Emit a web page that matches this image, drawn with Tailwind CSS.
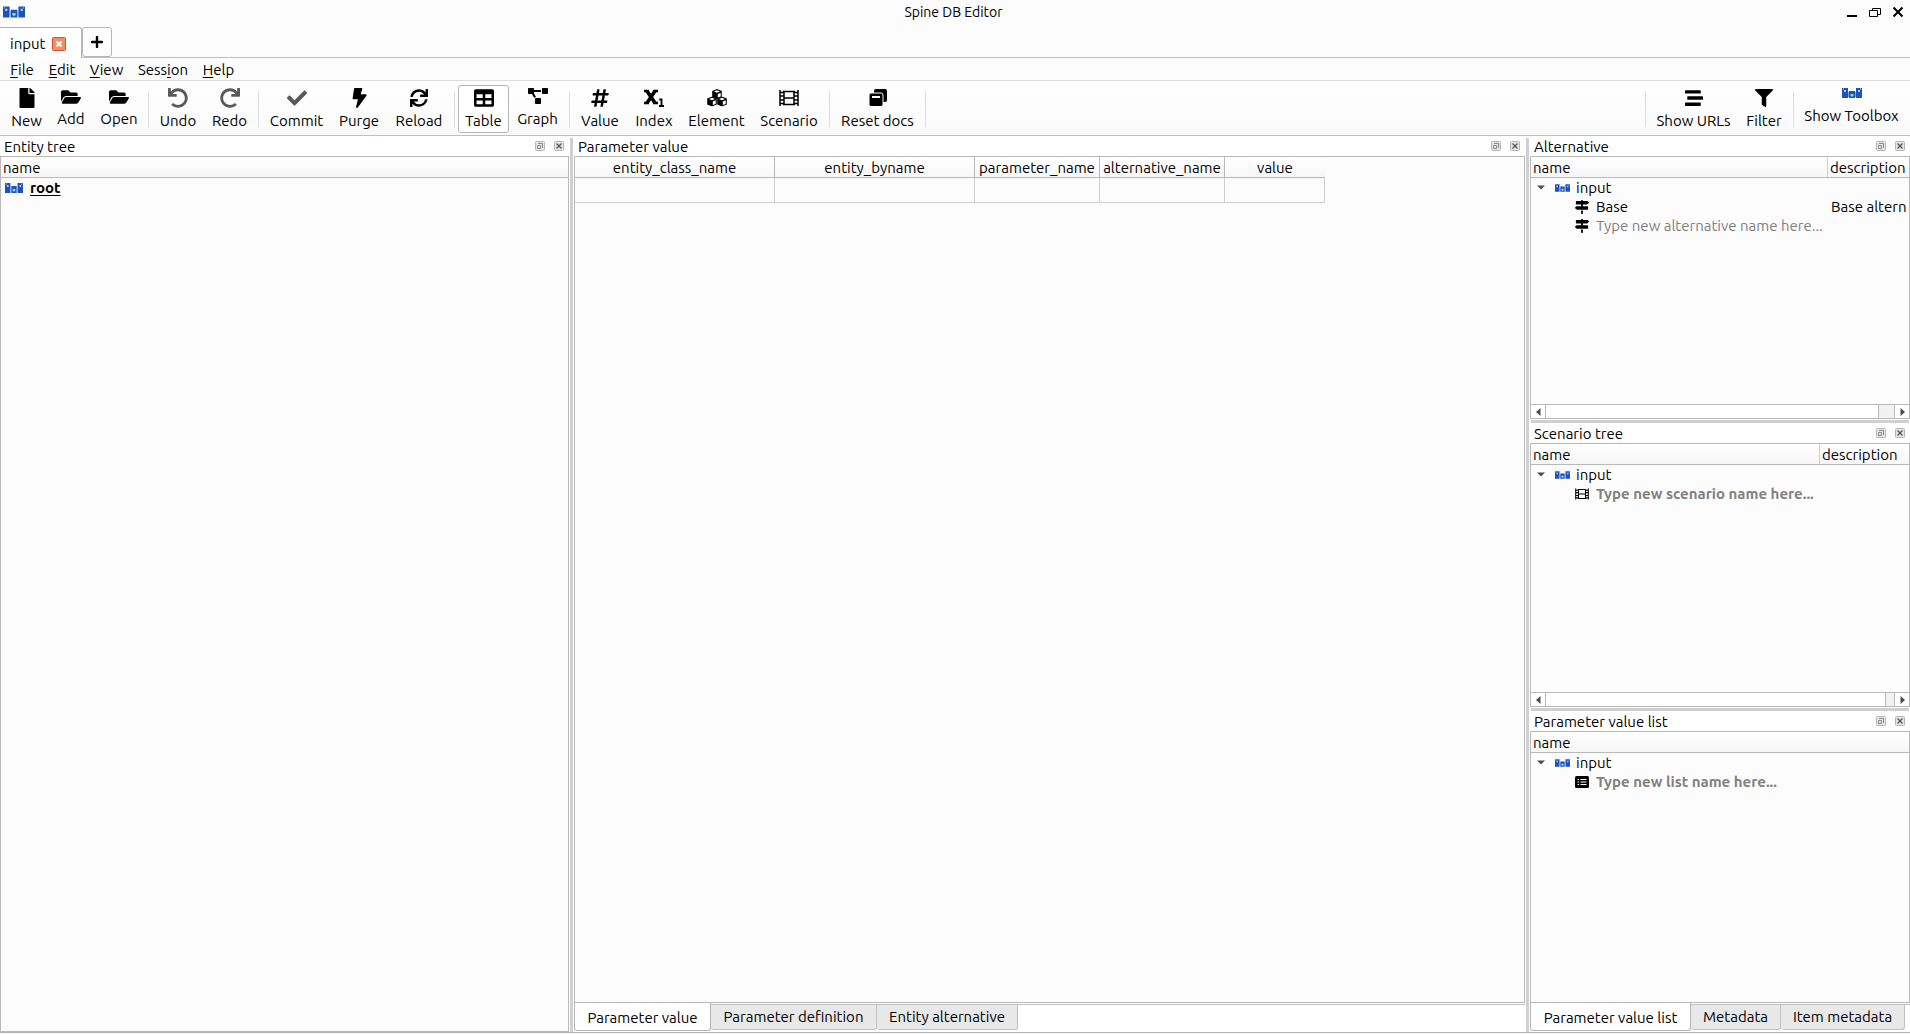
<!DOCTYPE html>
<html lang="en">
<head>
<meta charset="utf-8">
<title>Spine DB Editor</title>
<script src="https://cdn.jsdelivr.net/npm/@tailwindcss/browser@4"></script>
</head>
<body class="flex h-screen flex-col overflow-hidden bg-[#fcfcfc] font-['Ubuntu','Noto_Sans',sans-serif] text-[15px] leading-5 text-black">

<svg class="hidden">
  <symbol id="spine" viewBox="0 0 20 10">
    <path fill="#1f4fc4" d="M0 0h6v10H0zM14 0h6v10h-6zM7 3h6v7H7z"/>
    <path fill="#7f9be0" d="M6 4h1v5H6zM13 4h1v5h-1zM1 0h1v2H1zM18 0h1v2h-1z"/>
    <path fill="#8fe39a" d="M2 2h2v2H2zM16 2h2v2h-2zM8.500 6h3v1.500L10 9 8.500 7.500z"/>
  </symbol>
  <symbol id="film" viewBox="0 0 20 16">
    <path fill="none" stroke="currentColor" stroke-width="1.500" d="M1 0v16M19 0v16M5 1v14M15 1v14M4 1.500h12M4 14.500h12M5 8h10M1 2.500h4M1 6h4M1 10h4M1 13.500h4M15 2.500h4M15 6h4M15 10h4M15 13.500h4"/>
  </symbol>
  <symbol id="signs" viewBox="0 0 512 512">
    <path fill="currentColor" d="M507.310 84.690L464 41.370c-6-6-14.140-9.370-22.630-9.370H288V16c0-8.840-7.160-16-16-16h-32c-8.840 0-16 7.160-16 16v16H56c-13.250 0-24 10.750-24 24v80c0 13.250 10.750 24 24 24h385.370c8.490 0 16.620-3.370 22.630-9.370l43.310-43.310c6.250-6.260 6.250-16.380 0-22.630zM224 496c0 8.840 7.160 16 16 16h32c8.840 0 16-7.160 16-16V384h-64v112zm232-272H288v-32h-64v32H70.630c-8.490 0-16.620 3.370-22.630 9.370L4.690 276.690c-6.250 6.250-6.250 16.380 0 22.630L48 342.630c6 6 14.140 9.370 22.630 9.370H456c13.250 0 24-10.750 24-24v-80c0-13.250-10.750-24-24-24zM224 160h64v32h-64z"/>
  </symbol>
  <symbol id="float" viewBox="0 0 10 10">
    <rect x=".5" y=".5" width="9" height="9" rx="1" fill="#e6e6e6" stroke="#b5b5b5"/>
    <path fill="none" stroke="#8a8a8a" d="M3 2.500h4.500V7M2.500 4.500h3v3h-3z"/>
  </symbol>
  <symbol id="shut" viewBox="0 0 10 10">
    <rect x=".5" y=".5" width="9" height="9" rx="1" fill="#e6e6e6" stroke="#b5b5b5"/>
    <path fill="none" stroke="#555" stroke-width="1.300" d="M2.500 2.500l5 5M7.500 2.500l-5 5"/>
  </symbol>
  <symbol id="folder" viewBox="0 0 576 512">
    <path fill="currentColor" d="M572.694 292.093L500.270 416.248A63.997 63.997 0 0 1 444.989 448H45.025c-18.523 0-30.064-20.093-20.731-36.093l72.424-124.155A64 64 0 0 1 152 256h399.964c18.523 0 30.064 20.093 20.730 36.093zM152 224h328v-48c0-26.510-21.490-48-48-48H272l-64-64H48C21.490 64 0 85.490 0 112v278.046l69.077-118.418C86.214 242.250 117.989 224 152 224z"/>
  </symbol>
  <symbol id="undo" viewBox="0 0 512 512">
    <path fill="currentColor" d="M212.333 224.333H12c-6.627 0-12-5.373-12-12V12C0 5.373 5.373 0 12 0h48c6.627 0 12 5.373 12 12v78.112C117.773 39.279 184.260 7.470 258.175 8.007c136.906.994 246.448 111.623 246.157 248.532C504.041 393.258 393.120 504 256.333 504c-64.089 0-122.496-24.313-166.510-64.215-5.099-4.622-5.334-12.554-.467-17.420l33.967-33.967c4.474-4.474 11.662-4.717 16.401-.525C170.760 415.336 211.580 432 256.333 432c97.268 0 176-78.716 176-176 0-97.267-78.716-176-176-176-58.496 0-110.280 28.476-142.274 72.333h98.274c6.627 0 12 5.373 12 12v48c0 6.627-5.373 12-12 12z"/>
  </symbol>
  <symbol id="cube" viewBox="0 0 10 10">
    <path d="M5 0l4.800 2v6L5 10 .2 8V2z"/>
    <path fill="#fff" d="M5 1.200l3 1.200-3 1.300-3-1.300zM5.800 5l2.900-1.300v3.700L5.800 8.600z"/>
  </symbol>
  <symbol id="down" viewBox="0 0 8 5"><path fill="#4d4d4d" d="M0 .5h8L4 4.500z"/></symbol>
</svg>

<header class="flex h-[27px] shrink-0 items-center justify-between pr-[6px] pb-1 pl-[3px]">
  <svg class="h-3 w-[22px]"><use href="#spine"/></svg>
  <h1 class="pl-9 text-sm">Spine DB Editor</h1>
  <div class="flex items-center gap-[11px]">
    <button aria-label="Minimize"><svg class="h-3 w-3" viewBox="0 0 12 12"><path fill="#000" d="M1 9h10v2H1z"/></svg></button>
    <button aria-label="Restore"><svg class="h-3 w-3" viewBox="0 0 12 12" fill="none" stroke="#000"><path d="M.5 4.500h8v6h-8zM3.500 4V2.500h8v6H9"/></svg></button>
    <button aria-label="Close"><svg class="h-3 w-3" viewBox="0 0 12 12"><path stroke="#000" stroke-width="2" d="M1.500 1.500l9 9M10.500 1.500l-9 9"/></svg></button>
  </div>
</header>

<div class="flex h-[31px] shrink-0 items-end border-b border-[#c0c0c0]">
  <div class="-mb-px flex h-[31px] w-[82px] items-center gap-[6px] rounded-tr-[3px] border-t border-r border-[#b5b5b5] bg-white pt-px pl-[10px]">
    <span class="w-[36px]">input</span>
    <button aria-label="Close tab"><svg class="h-[14px] w-[14px]" viewBox="0 0 14 14"><rect x=".5" y=".5" width="13" height="13" rx="1" fill="#ef9163" stroke="#dd4a36"/><path stroke="#fff" stroke-width="2" d="M4.500 4.500l5 5M9.500 4.500l-5 5"/></svg></button>
  </div>
  <button aria-label="New tab" class="flex h-[30px] w-[30px] items-center justify-center rounded-[3px] border border-[#b5b5b5]"><svg class="h-3 w-3" viewBox="0 0 12 12"><path stroke="#000" stroke-width="2.400" stroke-linecap="round" d="M6 1v10M1 6h10"/></svg></button>
</div>

<nav class="flex h-[23px] shrink-0 items-center border-b border-[#dcdcdc] pt-px pl-[2px]">
  <button class="w-[40px]"><u class="underline-offset-2">F</u>ile</button>
  <button class="w-[40px]"><u class="underline-offset-2">E</u>dit</button>
  <button class="w-[49px]"><u class="underline-offset-2">V</u>iew</button>
  <button class="w-[64px]">Sess<u class="underline-offset-2">i</u>on</button>
  <button class="w-[47px]"><u class="underline-offset-2">H</u>elp</button>
</nav>

<div class="flex h-[55px] shrink-0 items-start border-b border-[#c0c0c0] bg-linear-to-b from-white to-[#fafafa] px-1 pt-1">
  <button class="flex w-[45px] flex-col items-center gap-[3px] pt-[3px]"><svg class="h-5 w-5" viewBox="0 0 384 512"><path d="M224 136V0H24C10.700 0 0 10.700 0 24v464c0 13.300 10.700 24 24 24h336c13.300 0 24-10.700 24-24V160H248c-13.200 0-24-10.800-24-24zm160-14.100v6.100H256V0h6.100c6.400 0 12.500 2.500 17 7l97.900 98c4.500 4.500 7 10.600 7 16.900z"/></svg>New</button>
  <button class="flex w-[44px] flex-col items-center gap-[3px] pt-[3px]"><svg class="h-[18px] w-5"><use href="#folder"/></svg>Add</button>
  <button class="flex w-[52px] flex-col items-center gap-[3px] pt-[3px]"><svg class="h-[18px] w-5"><use href="#folder"/></svg>Open</button>
  <div class="mx-[3px] mt-[6px] h-9 w-px bg-[#dcdcdc]"></div>
  <button class="flex w-[52px] flex-col items-center gap-[3px] pt-[3px]"><svg class="h-5 w-5 text-[#595959]"><use href="#undo"/></svg>Undo</button>
  <button class="flex w-[51px] flex-col items-center gap-[3px] pt-[3px]"><svg class="h-5 w-5 -scale-x-100 text-[#595959]"><use href="#undo"/></svg>Redo</button>
  <div class="mx-[3px] mt-[6px] h-9 w-px bg-[#dcdcdc]"></div>
  <button class="flex w-[69px] flex-col items-center gap-[3px] pt-[3px]"><svg class="h-5 w-5" viewBox="0 0 512 512"><path fill="#595959" d="M173.898 439.404l-166.400-166.400c-9.997-9.997-9.997-26.206 0-36.204l36.203-36.204c9.997-9.998 26.207-9.998 36.204 0L192 312.690 432.095 72.596c9.997-9.997 26.207-9.997 36.204 0l36.203 36.204c9.997 9.997 9.997 26.206 0 36.204l-294.400 294.401c-9.998 9.997-26.207 9.997-36.204-.001z"/></svg>Commit</button>
  <button class="flex w-[56px] flex-col items-center gap-[3px] pt-[3px]"><svg class="h-5 w-[15px]" viewBox="0 0 384 512"><path d="M350 160H220l42-130C266 15 255 0 239 0H76C64 0 54 9 52 21L16 261c-2 14 9 27 24 27h112l-48 195c-4 15 8 29 23 29 9 0 17-4 21-12l223-304c9-16-2-36-21-36z"/></svg>Purge</button>
  <button class="flex w-[64px] flex-col items-center gap-[3px] pt-[3px]"><svg class="h-5 w-[18px]" viewBox="0 0 512 512"><path d="M440.650 12.570l4 82.770A247.160 247.160 0 0 0 255.830 8C134.730 8 33.910 94.920 12.290 209.820A12 12 0 0 0 24.090 224h49.050a12 12 0 0 0 11.670-9.260 175.910 175.910 0 0 1 317-56.940l-101.460-4.860a12 12 0 0 0-12.570 12v47.410a12 12 0 0 0 12 12H500a12 12 0 0 0 12-12V12a12 12 0 0 0-12-12h-47.370a12 12 0 0 0-11.980 12.570zM255.830 432a175.610 175.610 0 0 1-146-77.800l101.800 4.870a12 12 0 0 0 12.570-12v-47.400a12 12 0 0 0-12-12H12a12 12 0 0 0-12 12V500a12 12 0 0 0 12 12h47.350a12 12 0 0 0 12-12.600l-4.150-82.570A247.170 247.170 0 0 0 255.830 504c121.110 0 221.930-86.920 243.550-201.820a12 12 0 0 0-11.800-14.180h-49.050a12 12 0 0 0-11.670 9.260A175.860 175.860 0 0 1 255.830 432z"/></svg>Reload</button>
  <div class="mx-[3px] mt-[6px] h-9 w-px bg-[#dcdcdc]"></div>
  <button aria-pressed="true" class="flex h-12 w-[51px] flex-col items-center gap-[3px] rounded-[3px] border border-[#b5b5b5] bg-white pt-[2px]"><svg class="h-5 w-5 shrink-0" viewBox="0 0 512 512"><path d="M464 32H48C21.490 32 0 53.490 0 80v352c0 26.510 21.490 48 48 48h416c26.510 0 48-21.490 48-48V80c0-26.510-21.490-48-48-48zM224 416H64v-96h160v96zm0-160H64v-96h160v96zm224 160H288v-96h160v96zm0-160H288v-96h160v96z"/></svg>Table</button>
  <button class="flex w-[57px] flex-col items-center gap-[3px] pt-[3px]"><svg class="h-[18px] w-5 pb-[2px]" viewBox="0 0 640 512"><path d="M384 320H256c-17.670 0-32 14.330-32 32v128c0 17.670 14.330 32 32 32h128c17.670 0 32-14.330 32-32V352c0-17.670-14.330-32-32-32zM192 32c0-17.670-14.330-32-32-32H32C14.330 0 0 14.330 0 32v128c0 17.670 14.330 32 32 32h95.720l73.160 128.040C211.980 300.980 232.400 288 256 288h.28L192 175.510V128h224V64H192V32zM608 0H480c-17.670 0-32 14.330-32 32v128c0 17.670 14.330 32 32 32h128c17.670 0 32-14.330 32-32V32c0-17.670-14.330-32-32-32z"/></svg>Graph</button>
  <div class="mx-[3px] mt-[6px] h-9 w-px bg-[#dcdcdc]"></div>
  <button class="flex w-[54px] flex-col items-center gap-[3px] pt-[3px]"><svg class="h-5 w-[18px]" viewBox="0 0 448 512"><path d="M440.667 182.109l7.143-40c1.313-7.355-4.342-14.109-11.813-14.109h-74.810l14.623-81.891C377.123 38.754 371.468 32 363.997 32h-40.632a12 12 0 0 0-11.813 9.891L296.175 128H197.540l14.623-81.891C213.477 38.754 207.822 32 200.350 32h-40.632a12 12 0 0 0-11.813 9.891L132.528 128H53.432a12 12 0 0 0-11.813 9.891l-7.143 40C33.163 185.246 38.818 192 46.289 192h74.810L98.242 320H19.146a12 12 0 0 0-11.813 9.891l-7.143 40C-1.123 377.246 4.532 384 12.003 384h74.810L72.190 465.891C70.877 473.246 76.532 480 84.003 480h40.632a12 12 0 0 0 11.813-9.891L151.826 384h98.634l-14.623 81.891C234.523 473.246 240.178 480 247.650 480h40.632a12 12 0 0 0 11.813-9.891L315.472 384h79.096a12 12 0 0 0 11.813-9.891l7.143-40c1.313-7.355-4.342-14.109-11.813-14.109h-74.810l22.857-128h79.096a12 12 0 0 0 11.813-9.891zM261.889 320h-98.634l22.857-128h98.634l-22.857 128z"/></svg>Value</button>
  <button class="flex w-[54px] flex-col items-center gap-[3px] pt-[3px]"><svg class="h-5 w-5" viewBox="0 0 20 20"><path fill="none" stroke="#000" stroke-width="3.600" d="M3 3l8 12M11 3L3 15"/><path fill="none" stroke="#000" stroke-width="2.400" d="M0 3h5M9 3h5M0 15h5M9 15h5"/><path fill="none" stroke="#000" stroke-width="1.800" d="M15 18h5M17.500 18v-6.500h-2.200"/></svg>Index</button>
  <button class="flex w-[71px] flex-col items-center gap-[3px] pt-[3px]"><svg class="h-5 w-5" viewBox="0 0 20 20"><use href="#cube" x="5" y="1" width="10" height="10"/><use href="#cube" x="0" y="8.500" width="10" height="10"/><use href="#cube" x="10" y="8.500" width="10" height="10"/></svg>Element</button>
  <button class="flex w-[74px] flex-col items-center gap-[3px] pt-[3px]"><svg class="h-5 w-5"><use href="#film"/></svg>Scenario</button>
  <div class="mx-[3px] mt-[6px] h-9 w-px bg-[#dcdcdc]"></div>
  <button class="flex w-[89px] flex-col items-center gap-[3px] pt-[3px]"><svg class="h-5 w-5" viewBox="0 0 20 20"><rect x="6" y="1" width="13" height="13" rx="2"/><rect x="1" y="5" width="14" height="13.500" rx="2" stroke="#fff"/><path fill="#fff" d="M4 8h8v2H4z"/></svg>Reset docs</button>
  <div class="mx-[3px] mt-[6px] h-9 w-px bg-[#dcdcdc]"></div>
  <div class="grow"></div>
  <div class="mx-[3px] mt-[6px] h-9 w-px bg-[#dcdcdc]"></div>
  <button class="flex w-[89px] flex-col items-center gap-[3px] pt-[3px]"><svg class="h-5 w-[18px]" viewBox="0 0 512 512"><path d="M16 128h416c8.840 0 16-7.160 16-16V48c0-8.840-7.160-16-16-16H16C7.160 32 0 39.160 0 48v64c0 8.840 7.160 16 16 16zm480 80H80c-8.840 0-16 7.160-16 16v64c0 8.840 7.160 16 16 16h416c8.840 0 16-7.160 16-16v-64c0-8.840-7.160-16-16-16zm-64 176H16c-8.840 0-16 7.160-16 16v64c0 8.840 7.160 16 16 16h416c8.840 0 16-7.160 16-16v-64c0-8.840-7.160-16-16-16z"/></svg>Show URLs</button>
  <button class="flex w-[52px] flex-col items-center gap-[3px] pt-[3px]"><svg class="h-5 w-[18px]" viewBox="0 0 512 512"><path d="M487.976 0H24.028C2.710 0-8.047 25.866 7.058 40.971L192 225.941V432c0 7.831 3.821 15.170 10.237 19.662l80 55.980C298.020 518.690 320 507.493 320 487.980V225.941l184.947-184.970C520.021 25.896 509.338 0 487.976 0z"/></svg>Filter</button>
  <div class="mx-[3px] mt-[6px] h-9 w-px bg-[#dcdcdc]"></div>
  <button class="flex w-[109px] flex-col items-center gap-[3px] pt-[3px]"><svg class="h-[15px] w-5 pb-[5px]"><use href="#spine"/></svg>Show Toolbox</button>
</div>

<main class="flex min-h-0 grow bg-white">
  <section class="flex w-[569px] shrink-0 flex-col">
    <div class="flex h-5 shrink-0 items-center gap-[9px] pr-[5px] pl-1">
      <h2 class="grow pt-px">Entity tree</h2>
      <button aria-label="Float"><svg class="h-[10px] w-[10px]"><use href="#float"/></svg></button>
      <button aria-label="Close"><svg class="h-[10px] w-[10px]"><use href="#shut"/></svg></button>
    </div>
    <div class="grow border border-[#b9b9b9] bg-[#fcfcfc]">
      <div class="h-[21px] border-b border-[#b9b9b9] bg-linear-to-b from-white to-[#f7f7f7] pt-px pl-[2px]">name</div>
      <div class="flex h-5 items-center gap-[7px] pl-1"><svg class="h-[10px] w-[18px]" viewBox="0 0 20 10" preserveAspectRatio="none"><use href="#spine"/></svg><b class="underline underline-offset-2">root</b></div>
    </div>
  </section>

  <div class="flex w-[5px] shrink-0 justify-center pt-[2px]"><div class="w-[3px] bg-[#d0d0d0]"></div></div>

  <section class="flex min-w-0 grow flex-col">
    <div class="flex h-5 shrink-0 items-center gap-[9px] pr-[5px] pl-1">
      <h2 class="grow pt-px">Parameter value</h2>
      <button aria-label="Float"><svg class="h-[10px] w-[10px]"><use href="#float"/></svg></button>
      <button aria-label="Close"><svg class="h-[10px] w-[10px]"><use href="#shut"/></svg></button>
    </div>
    <div class="grow border border-[#b9b9b9] bg-[#fcfcfc]">
      <table class="w-[750px] table-fixed border-separate border-spacing-0">
        <thead>
          <tr class="h-[21px] bg-linear-to-b from-white to-[#f7f7f7] leading-[19px]">
            <th class="w-[200px] border-r border-b border-[#b9b9b9] p-0 pt-px font-normal">entity_class_name</th>
            <th class="w-[200px] border-r border-b border-[#b9b9b9] p-0 pt-px font-normal">entity_byname</th>
            <th class="w-[125px] border-r border-b border-[#b9b9b9] p-0 pt-px font-normal">parameter_name</th>
            <th class="w-[125px] border-r border-b border-[#b9b9b9] p-0 pt-px font-normal">alternative_name</th>
            <th class="w-[100px] border-b border-[#b9b9b9] p-0 pt-px font-normal">value</th>
          </tr>
        </thead>
        <tbody>
          <tr class="h-[25px]">
            <td class="border-r border-b border-[#cfcfcf]"></td>
            <td class="border-r border-b border-[#cfcfcf]"></td>
            <td class="border-r border-b border-[#cfcfcf]"></td>
            <td class="border-r border-b border-[#cfcfcf]"></td>
            <td class="border-r border-b border-[#cfcfcf]"></td>
          </tr>
        </tbody>
      </table>
    </div>
    <div class="mt-px mb-px flex h-[27px] shrink-0 border-t border-[#c0c0c0]">
      <button class="-mt-[2px] h-7 w-[137px] rounded-b-[3px] border border-t-0 border-[#b5b5b5] bg-white pt-[2px]">Parameter value</button>
      <button class="h-[25px] w-[166px] rounded-b-[3px] border border-t-0 border-l-0 border-[#c0c0c0] bg-[#e8e8e8]">Parameter definition</button>
      <button class="h-[25px] w-[141px] rounded-b-[3px] border border-t-0 border-l-0 border-[#c0c0c0] bg-[#e8e8e8]">Entity alternative</button>
    </div>
  </section>

  <div class="flex w-[5px] shrink-0 justify-center pt-[2px]"><div class="w-[3px] bg-[#d0d0d0]"></div></div>

  <aside class="flex w-[380px] shrink-0 flex-col">
    <section class="flex min-h-0 flex-[283] flex-col">
      <div class="flex h-5 shrink-0 items-center gap-[9px] pr-[5px] pl-1">
        <h2 class="grow pt-px">Alternative</h2>
        <button aria-label="Float"><svg class="h-[10px] w-[10px]"><use href="#float"/></svg></button>
        <button aria-label="Close"><svg class="h-[10px] w-[10px]"><use href="#shut"/></svg></button>
      </div>
      <div class="flex grow flex-col overflow-hidden border border-[#b9b9b9] bg-[#fcfcfc] whitespace-nowrap">
        <div class="flex h-[21px] shrink-0 border-b border-[#b9b9b9] bg-linear-to-b from-white to-[#f7f7f7]">
          <span class="w-[297px] border-r border-[#cfcfcf] pt-px pl-[2px]">name</span><span class="pt-px pl-[2px]">description</span>
        </div>
        <div class="flex h-[19px] shrink-0 items-center pl-[6px]"><svg class="mr-[10px] h-[5px] w-2"><use href="#down"/></svg><svg class="mr-[6px] h-2 w-[15px]"><use href="#spine"/></svg>input</div>
        <div class="flex h-[19px] shrink-0 items-center pl-11"><svg class="mr-[7px] h-[14px] w-[14px]"><use href="#signs"/></svg><span class="w-[235px]">Base</span><span>Base altern</span></div>
        <div class="flex h-[19px] shrink-0 items-center pl-11"><svg class="mr-[7px] h-[14px] w-[14px]"><use href="#signs"/></svg><span class="text-[#808080]">Type new alternative name here...</span></div>
        <div class="grow"></div>
        <div class="flex h-[14px] shrink-0 border-t border-[#b9b9b9]">
          <button aria-label="Scroll left" class="flex w-[15px] items-center justify-center border-r border-[#b9b9b9] bg-white"><svg class="h-2 w-[5px]" viewBox="0 0 5 8"><path fill="#4d4d4d" d="M4.500 0v8L0 4z"/></svg></button>
          <div class="grow bg-white"></div>
          <div class="w-[17px] border-x border-[#b9b9b9] bg-[#f1f1f1]"></div>
          <button aria-label="Scroll right" class="flex w-[14px] items-center justify-center bg-white"><svg class="h-2 w-[5px]" viewBox="0 0 5 8"><path fill="#4d4d4d" d="M.5 0v8L5 4z"/></svg></button>
        </div>
      </div>
    </section>
    <div class="mx-px mt-px h-[3px] shrink-0 bg-[#d0d0d0]"></div>
    <section class="flex min-h-0 flex-[284] flex-col">
      <div class="flex h-5 shrink-0 items-center gap-[9px] pr-[5px] pl-1">
        <h2 class="grow pt-px">Scenario tree</h2>
        <button aria-label="Float"><svg class="h-[10px] w-[10px]"><use href="#float"/></svg></button>
        <button aria-label="Close"><svg class="h-[10px] w-[10px]"><use href="#shut"/></svg></button>
      </div>
      <div class="flex grow flex-col overflow-hidden border border-[#b9b9b9] bg-[#fcfcfc] whitespace-nowrap">
        <div class="flex h-[21px] shrink-0 border-b border-[#b9b9b9] bg-linear-to-b from-white to-[#f7f7f7]">
          <span class="w-[289px] border-r border-[#cfcfcf] pt-px pl-[2px]">name</span><span class="pt-px pl-[2px]">description</span>
        </div>
        <div class="flex h-[19px] shrink-0 items-center pl-[6px]"><svg class="mr-[10px] h-[5px] w-2"><use href="#down"/></svg><svg class="mr-[6px] h-2 w-[15px]"><use href="#spine"/></svg>input</div>
        <div class="flex h-[19px] shrink-0 items-center pl-11"><svg class="mr-[7px] h-3 w-[14px]"><use href="#film"/></svg><b class="text-[#808080]">Type new scenario name here...</b></div>
        <div class="grow"></div>
        <div class="flex h-[14px] shrink-0 border-t border-[#b9b9b9]">
          <button aria-label="Scroll left" class="flex w-[15px] items-center justify-center border-r border-[#b9b9b9] bg-white"><svg class="h-2 w-[5px]" viewBox="0 0 5 8"><path fill="#4d4d4d" d="M4.500 0v8L0 4z"/></svg></button>
          <div class="grow bg-white"></div>
          <div class="w-[10px] border-x border-[#b9b9b9] bg-[#f1f1f1]"></div>
          <button aria-label="Scroll right" class="flex w-[14px] items-center justify-center bg-white"><svg class="h-2 w-[5px]" viewBox="0 0 5 8"><path fill="#4d4d4d" d="M.5 0v8L5 4z"/></svg></button>
        </div>
      </div>
    </section>
    <div class="mx-px mt-px h-[3px] shrink-0 bg-[#d0d0d0]"></div>
    <section class="flex min-h-0 flex-[292] flex-col">
      <div class="flex h-5 shrink-0 items-center gap-[9px] pr-[5px] pl-1">
        <h2 class="grow pt-px">Parameter value list</h2>
        <button aria-label="Float"><svg class="h-[10px] w-[10px]"><use href="#float"/></svg></button>
        <button aria-label="Close"><svg class="h-[10px] w-[10px]"><use href="#shut"/></svg></button>
      </div>
      <div class="grow border border-[#b9b9b9] bg-[#fcfcfc]">
        <div class="h-[21px] border-b border-[#b9b9b9] bg-linear-to-b from-white to-[#f7f7f7] pt-px pl-[2px]">name</div>
        <div class="flex h-[19px] items-center pl-[6px]"><svg class="mr-[10px] h-[5px] w-2"><use href="#down"/></svg><svg class="mr-[6px] h-2 w-[15px]"><use href="#spine"/></svg>input</div>
        <div class="flex h-[19px] items-center pl-11"><svg class="mr-[7px] h-3 w-[14px]" viewBox="0 0 14 12"><rect width="14" height="12" rx="1.500"/><path stroke="#fff" d="M2.500 3.500H4M5.500 3.500h6M2.500 6H4M5.500 6h6M2.500 8.500H4M5.500 8.500h6"/></svg><b class="text-[#808080]">Type new list name here...</b></div>
      </div>
    </section>
    <div class="mt-px mb-px flex h-[27px] shrink-0 border-t border-[#c0c0c0]">
      <button class="-mt-[2px] h-7 w-[161px] rounded-b-[3px] border border-t-0 border-[#b5b5b5] bg-white pt-[2px]">Parameter value list</button>
      <button class="h-[25px] w-[90px] rounded-b-[3px] border border-t-0 border-l-0 border-[#c0c0c0] bg-[#e8e8e8]">Metadata</button>
      <button class="h-[25px] w-[124px] rounded-b-[3px] border border-t-0 border-l-0 border-[#c0c0c0] bg-[#e8e8e8]">Item metadata</button>
    </div>
  </aside>
</main>
<footer class="h-[2px] shrink-0 border-t border-[#b5b5b5] bg-[#f0f0f0]"></footer>
</body>
</html>
